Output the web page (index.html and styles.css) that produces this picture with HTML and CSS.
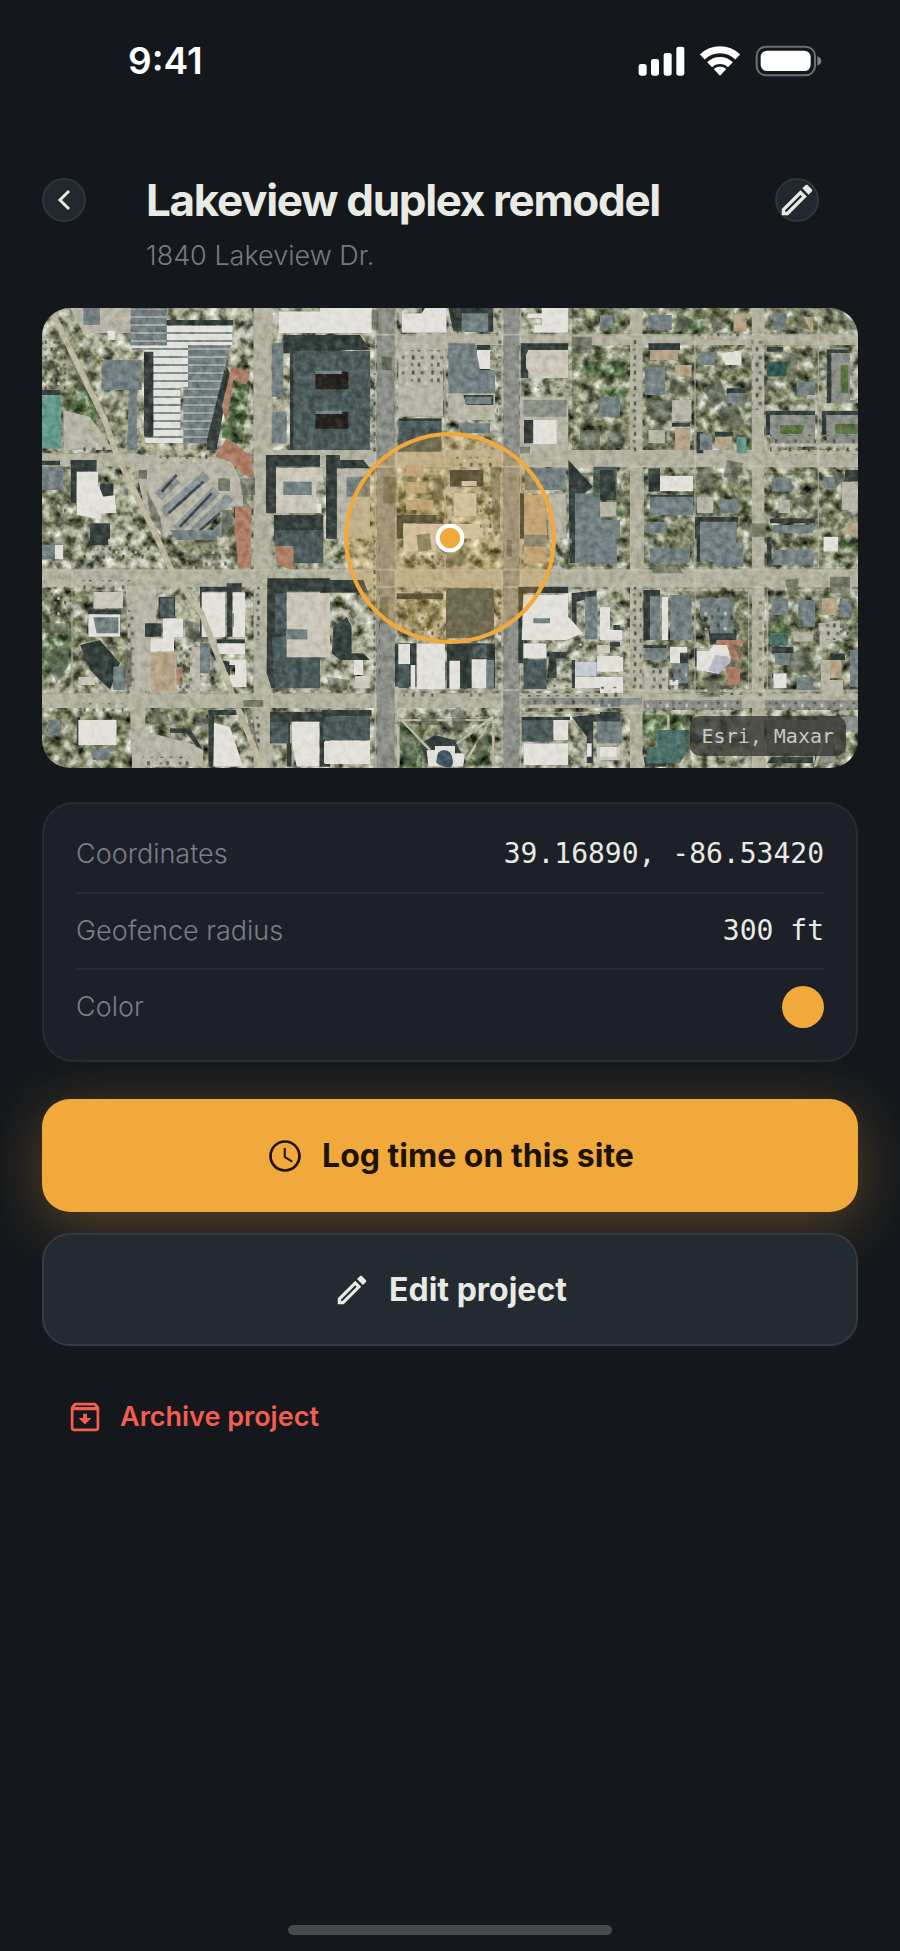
FILE: index.html
```html
<!DOCTYPE html>
<html lang="en">
<head>
	<meta charset="utf-8">
	<meta name="viewport" content="width=device-width, initial-scale=1">
	<title>Lakeview duplex remodel</title>
	<link rel="stylesheet" href="styles.css">
</head>
<body>
	<div class="status">
		<span class="time">9:41</span>
		<svg class="status-icons" viewBox="0 0 552 92" aria-hidden="true">
			<g fill="#fff">
				<rect x="2" y="55" width="24" height="35" rx="7"/>
				<rect x="39" y="40" width="24" height="50" rx="7"/>
				<rect x="77" y="22" width="24" height="68" rx="7"/>
				<rect x="115" y="3" width="24" height="87" rx="7"/>
				<path d="M246 90L227 70A27 27 0 0 1 265 70Z"/>
				<rect x="368" y="15" width="150" height="61" rx="19"/>
			</g>
			<g fill="none" stroke="#fff" stroke-width="21">
				<path d="M193 34A76 76 0 0 1 299 34M215 57A44 44 0 0 1 277 57"/>
			</g>
			<rect x="356" y="3" width="175" height="86" rx="28" fill="none" stroke="#6d7073" stroke-width="6"/>
			<path d="M538 32Q550 36 550 46T538 60Z" fill="#7c7f81"/>
		</svg>
	</div>

	<header class="header">
		<button class="round" aria-label="Back">
			<svg viewBox="0 0 44 44"><path d="M27 13L18 22L27 31" fill="none" stroke="currentColor" stroke-width="3"/></svg>
		</button>
		<h1>Lakeview duplex remodel</h1>
		<button class="round" aria-label="Edit project details">
			<svg viewBox="-1 -1 26 26"><path d="M14.060 9.020l.920.920L5.920 19H5v-.920l9.060-9.060M17.660 3c-.250 0-.510.100-.700.290l-1.830 1.830 3.750 3.750 1.830-1.830c.390-.390.390-1.020 0-1.410l-2.340-2.340c-.200-.200-.450-.290-.710-.290zm-3.600 3.190L3 17.250V21h3.750L17.810 9.940l-3.750-3.750z"/></svg>
		</button>
		<p class="address">1840 Lakeview Dr.</p>
	</header>

	<main>
		<div class="map">
			<svg class="map-view" viewBox="0 0 2448 1380" preserveAspectRatio="xMidYMid slice" role="img" aria-label="Satellite map of the project site">
				<defs>
					<filter id="rough" x="0" y="0" width="100%" height="100%" color-interpolation-filters="sRGB">
						<feTurbulence type="fractalNoise" baseFrequency=".032" numOctaves="3" seed="7" result="n"/>
						<feColorMatrix in="n" values="1.250 .100 0 0 -.180  1.250 .120 0 0 -.180  1.250 0 .050 0 -.170  0 0 0 0 1" result="g"/>
						<feBlend in="g" in2="SourceGraphic" mode="hard-light" result="b"/>
						<feGaussianBlur in="b" stdDeviation="2" result="s"/>
						<feComposite in="s" in2="SourceGraphic" operator="in"/>
					</filter>
					<filter id="fine" x="0" y="0" width="100%" height="100%" color-interpolation-filters="sRGB">
						<feTurbulence type="fractalNoise" baseFrequency=".050" numOctaves="3" seed="3" result="n"/>
						<feColorMatrix in="n" values=".600 0 0 0 .200  .600 0 0 0 .200  .600 0 0 0 .200  0 0 0 0 1" result="g"/>
						<feBlend in="g" in2="SourceGraphic" mode="soft-light" result="b"/>
						<feComposite in="b" in2="SourceGraphic" operator="in" result="c"/>
						<feGaussianBlur in="c" stdDeviation="2"/>
					</filter>
					<pattern id="ribs" width="20" height="24" patternUnits="userSpaceOnUse">
						<rect width="20" height="24" fill="#e2e2df"/><rect width="20" height="6" fill="#858d8b"/>
					</pattern>
					<pattern id="ribs-grey" width="20" height="24" patternUnits="userSpaceOnUse">
						<rect width="20" height="24" fill="#737f80"/><rect width="20" height="6" fill="#a0a8a6"/>
					</pattern>
					<pattern id="cars" width="58" height="46" patternUnits="userSpaceOnUse">
						<rect x="3" y="4" width="8" height="12" fill="#565b53"/><rect x="24" y="16" width="7" height="10" fill="#d0cdbf"/><rect x="40" y="6" width="9" height="9" fill="#777a6d"/><rect x="12" y="30" width="10" height="9" fill="#666a5e"/><rect x="44" y="28" width="7" height="12" fill="#4c524b"/>
					</pattern>
				</defs>

				<g filter="url(#rough)">
					<rect width="2448" height="1380" class="m-lot"/>
					<!-- downtown blocks -->
					<path class="m-yard" d="M0 150L110 80L290 420H0ZM60 30L180 170L250 380L170 300ZM0 500H170V760H0ZM0 850H290V1130H0ZM260 580L390 830H560V640L380 700ZM470 500H620V760H540ZM0 1210H280V1380H0ZM330 1190H530V1380H330ZM1070 500H1200V660H1070ZM1080 850H1200V970H1080ZM1070 1230H1350V1380H1070Z"/>
					<!-- residential blocks -->
					<path class="m-grove" d="M1590 0H1764V81H1590ZM1804 0H2129V81H1804ZM2169 0H2448V81H2169ZM1590 121H1764V436H1590ZM1804 121H2129V436H1804ZM2169 121H2330V290H2169ZM1580 496H1764V776H1580ZM1804 496H2129V776H1804ZM2169 496H2448V776H2169ZM1804 850H2129V1146H1804ZM2179 850H2448V1146H2179ZM1804 1220H1950V1380H1804ZM2179 1220H2448V1380H2179Z"/>
					<path class="m-green" d="M70 300L110 220L165 270L160 350L90 330ZM0 970H90V1100H0ZM550 210L625 220L600 410L540 390ZM1630 160H1750V210H1630ZM1690 235H1760V275H1690ZM1075 1240L1140 1290V1380H1075ZM1275 1370L1345 1260V1370ZM2390 170H2420V280H2390ZM2110 395H2130V430H2110ZM2180 930H2240V1010H2180ZM1800 1220H1945V1290H1800ZM2200 740H2290V770H2200ZM2370 700H2440V730H2370ZM1920 30H1990V70H1920ZM1960 720H2080V770H1960ZM1650 600H1740V640H1650Z"/>
				</g>

				<g filter="url(#fine)">
					<!-- streets -->
					<path class="m-street" d="M0 436H280L420 470H684V426H2448V476H0ZM0 786H2448V836H0ZM0 1156H2448V1200H0ZM634 0H688V1380H634ZM1764 0H1802V1380H1764ZM2129 0H2167V1380H2129ZM1000 82H2448V112H1000ZM250 790H310V1380H270Z"/>
					<path class="m-asphalt" d="M1004 0H1058V1380H1004ZM1384 0H1432V1380H1384ZM1804 1176H2100V1206H1804ZM2170 1176H2448V1206H2170ZM1434 1170H1800V1190H1434Z"/>
					<path class="m-line" d="M0 785H2448M0 837H2448M1000 80H2448M684 476H2448M1060 1146H2448M1434 1214H1804M1800 1150H2448M2176 1140V840M2120 836V1140M1000 0V1380M1062 0V1380M1380 0V1380M1436 0V1380M1209 100V830M1959 90V1150M2329 30V780M690 0V1380M90 760V1140M1804 496V770"/>

					<g transform="translate(-36 -24)">
						<path class="m-pave" d="M120 24H300V100H160ZM100 330L180 350L250 450H100ZM310 470H600L640 560V620H560L480 716L410 700L340 610Z"/>
						<path class="m-slate" d="M160 24H210V75H160ZM302 24H410V136H302ZM215 180H335V270H215ZM725 130H760V290H725ZM725 335H770V430H725ZM300 200H322V450H290ZM36 500H100V570H36Z"/>
						<path class="m-shade" d="M345 150H372V430H345ZM400 60H610V76H400ZM530 360L590 200L600 220L560 450H530ZM760 105H930V450H780V160H760ZM708 465H870V500H738V640H708ZM122 480H200V515H140V610H122ZM888 465H930V716H888ZM36 482H90V496H36ZM210 550H250V590H210ZM36 270H90V286H36ZM180 670H240V716H180ZM732 645H880V716H732Z"/>
						<path class="m-teal" d="M36 285H94V446H36Z"/>
						<path fill="url(#ribs)" d="M410 76H608V136H410ZM305 136H474V262H452V428H345V150H305ZM350 410H460V430H350Z"/>
						<path fill="#363d3b" d="M342 155H370V410H342Z"/>
						<path fill="url(#ribs-grey)" d="M474 136H602L528 430H460V262H474ZM302 28H410V134H302Z"/>
						<path class="m-brick" d="M575 320L605 200L660 215L650 255L610 240L590 370ZM555 470L590 415L668 470V535L640 525L600 485ZM615 620H664V716H615Z"/>
						<path class="m-roof" d="M140 515H205V555L220 590L255 585L260 640H215V660L140 645ZM232 92H256V120H232ZM745 34H930V100H745ZM835 610H875V640H835Z"/>
						<path class="m-cream" d="M738 503H880V545H860V640H738ZM320 355H335V385H320Z"/>
						<path class="m-slate" d="M760 545H845V585H760Z"/>
						<path class="m-dark" d="M790 152H930V450H790Z"/>
						<path class="m-cars" d="M385 590L440 535M400 640L530 525M440 690L560 570M480 710L600 590M560 700L610 650"/>
						<path class="m-dashes" d="M395 575L440 525M415 640L520 545M450 680L545 580M500 700L570 640"/>
						<path class="m-tree" d="M325 510h26v26h-26ZM565 535h35v38h-35ZM350 570l40 80 10 60-40-60ZM630 535h45v50h-40ZM610 630h-35v80h30ZM130 190l60 100-40-20Z"/>
						<path fill="url(#cars)" d="M40 120H110V270H40ZM150 430H250V460H150ZM380 455H560V490H380ZM60 580H110V640H60Z"/>
					</g>

					<g transform="translate(834 -24)">
						<path class="m-pave" d="M235 130H370V350H235ZM385 280H525V360H385ZM50 505H150V716H50ZM600 290H745V460H600Z"/>
						<path class="m-asphalt" d="M610 300H740V350H610Z"/>
						<path class="m-shade" d="M0 105H120L150 150H0ZM385 24H520V95H400ZM24 480H130L150 505H50V716H24ZM602 130H745V150H625V235H602ZM612 360H640V430H612ZM235 355H365V365H235ZM470 135H510V210H470ZM745 480L820 560L770 600V716H748ZM305 24H380V40H305ZM430 285H520V315H440ZM390 510H490V560H390ZM230 645H350V670H250V716H230ZM600 580H612V716H600Z"/>
						<path class="m-dark" d="M0 152H150V450H0ZM235 365H365V455H235ZM820 500H890V600H820Z"/>
						<path fill="#272420" d="M0 215H85V268H0ZM0 335H85V386H0Z"/>
						<path fill="#272420" d="M-14 215H0V268H-14ZM-14 335H0V386H-14Z"/>
						<path class="m-roof" d="M0 24H158V100H0ZM245 40H305L315 24H380V98H245ZM622 55H665V75H640V98H745V24H665V40H622ZM640 360H710V432H640ZM470 150H510V207H470Z"/>
						<path class="m-slate" d="M-14 212H65V222H-14ZM-14 332H65V342H-14Z"/>
						<path class="m-cream" d="M625 150H745V235H640L618 205V165ZM400 578H470V650H400ZM250 672H490V716H250ZM425 543H470V558H425Z"/>
						<path class="m-slate" d="M385 130H465L480 210H525V280H385ZM425 40H505V95H425ZM435 290H515V312H435ZM615 505H735V570H615ZM765 580H845V716H765ZM415 370H510V400H430ZM80 530H150V590H80Z"/>
						<path class="m-tan" d="M612 585H680V705H612ZM258 495H310V530H258ZM258 545H320V580H258ZM258 600H340V630H258Z"/>
						<path class="m-pave" d="M685 580H740V716H685Z"/>
						<path class="m-tree" d="M155 30h20v60h-20ZM185 170h30v40h-30ZM600 440h30v20h-30ZM190 530h40v80h-40ZM340 540h30v60h-30ZM510 500h30v200h-20ZM820 520h60v70h-60ZM755 110h60v50h-60ZM780 390h60v60h-60Z"/>
						<path fill="url(#cars)" d="M245 150H375V255H245ZM530 30H550V350H530ZM155 220H175V460H155ZM400 470H520V500H400ZM625 245H745V265H625ZM480 580H540V716H480Z"/>
					</g>

					<g transform="translate(1674 -24)">
						<path class="m-shade" d="M680 148H748V160H695V310H680ZM497 332H645V345H510V405H497ZM665 332H774V345H680V405H665ZM145 505H180V575H145ZM285 650H415V670H300V716H285ZM145 130H240V150H145ZM0 510H40L50 600H0ZM380 265H440V280H380ZM215 368H270V380H215ZM500 140H550V155H500ZM345 395H400V410H345ZM290 395H310V460H290ZM150 585H280V600H150ZM510 655H645V670H510ZM735 510H774V545H735Z"/>
						<path class="m-asphalt" d="M695 160H750V310H695ZM510 345H645V430H510ZM680 345H774V430H680ZM745 300H774V310H745Z"/>
						<path fill="#5b7442" d="M540 375H615L605 402H540ZM705 372H774V402H705ZM722 195H745V280H722Z"/>
						<path class="m-roof" d="M180 527H280V574H180ZM362 160L425 150V195H375Z"/>
						<path class="m-slate" d="M135 200H195V285H135ZM150 590H280V645H150ZM300 665H410V716H300ZM360 598H415V640H360ZM0 290H60V350H0ZM140 665H200V700H140ZM0 660H60V716H0ZM515 535H575V575H515ZM520 675H640V700H520ZM300 155H345V195H300ZM380 280H430V310H380ZM520 40H560V90H520ZM145 45H215V90H145ZM590 245H645V285H590ZM300 400H335V450H300ZM0 45H40V85H0ZM670 530H710V565H670Z"/>
						<path class="m-teal" d="M410 410H440V460H410Z"/>
						<path fill="#2f5a50" d="M500 185H560V230H500Z"/>
						<path class="m-pave" d="M725 545H774V630H725ZM535 600H570V640H535ZM290 590H340V640H290ZM510 430H774V440H510ZM145 390H195V430H145ZM0 605H50V650H0ZM215 300H275V365H215Z"/>
						<path class="m-tan" d="M400 40H440V95H400ZM345 410H395V445H345ZM225 195H275V230H225ZM735 668H774V700H735ZM150 150H235V180H150ZM610 50H640V95H610ZM225 385H270V450H225Z"/>
						<path class="m-tree" d="M310 265l50-30 20 60-40 30ZM350 330l60-20 25 60-50 30ZM380 480l50 10-20 50-40-10ZM60 550l30 70-40-20ZM570 600l60-20v60ZM555 155l40 10-10 90-30-30ZM140 300h60v60h-50ZM290 500h50v70h-40ZM690 500l50 30-30 30ZM440 670h60v40h-50ZM230 40l50 20-20 40-30-10ZM330 50l50 30-40 20ZM20 400l40-20 10 60-40 10ZM210 240l60 10-20 40-40-10ZM600 30l30 60-40-10Z"/>
						<path fill="url(#cars)" d="M510 405H650V465H510ZM670 405H774V465H670ZM85 120H110V460H85ZM455 120H490V330H455ZM270 100H440V120H270Z"/>
					</g>

					<g transform="translate(-36 666)">
						<path class="m-pave" d="M360 365H440V490H360ZM320 170H380V480H320ZM480 350H510V500H480ZM330 600L520 650V710H340Z"/>
						<path class="m-shade" d="M510 170H590V185H525V320H510ZM590 160H635V190H607V320H590ZM385 200H435V265H385ZM345 280H395V320H345ZM175 238H275V252H175V310H170ZM150 345L210 330L270 400L240 480L180 420ZM535 540H620V555H552V710H535ZM712 145H900V185H770V475H725L710 430ZM720 545H900V575H780V640H720ZM560 328H645V345H560ZM180 0H235V45H180ZM140 560H150V640H140ZM570 390L600 395V440ZM770 640H785V710H770ZM870 545H900V710H868ZM420 595H480L520 660L500 650L470 610H420Z"/>
						<path class="m-roof" d="M515 187H586V322H515ZM608 187H645V322H608ZM398 265H460V322H432V365H362V325H398ZM560 340H645V372H560ZM598 388H650V472H598V435H615V405H598ZM175 253H270V320H175ZM145 570H260V645H145ZM552 578L600 590L640 710H550ZM785 575H868V710H800L785 640ZM882 635H900V700H882ZM75 44H100V88H75Z"/>
						<path class="m-slate" d="M190 262H265V310H200ZM36 44H75V88H36ZM250 410H285V480H250ZM510 340H540V430H510ZM55 570H90V615H55ZM180 655H240V690H190ZM420 0H560V30H440Z"/>
						<path class="m-dark" d="M735 0H880V100H790V50H735ZM725 320H770V380H870V475H735ZM390 205H432V262H390ZM735 190H768V310H735ZM722 575H775V640H722Z"/>
						<path class="m-tan" d="M362 368H435V485H362Z"/>
						<path class="m-cream" d="M770 187H900V382H770ZM145 440H195V465H145ZM190 185H280V235H190Z"/>
						<path class="m-slate" d="M770 298H832V328H770Z"/>
						<path class="m-brick" d="M735 48H790V120L740 105ZM615 0H664V115H625ZM440 410H458V465H440Z"/>
						<path class="m-tree" d="M465 270l40 10 10 60-50-20ZM650 550l15-5 25 140-30-70ZM495 550l30-5-5 45-25-5ZM40 370l70-30 10 60-40 60ZM350 550l60-5 10 30-60 10ZM640 510h60v20h-60ZM600 250h12v40h-12ZM280 360h25v110h-20ZM45 280h70v30h-70Z"/>
						<path fill="url(#cars)" d="M140 40H370V95H140ZM150 150H300V180H150ZM50 170H130V260H50ZM290 240H315V470H290ZM440 350H500V480H440ZM660 170H690V330H660ZM660 560H690V700H660ZM340 680H480V710H340ZM460 60H600V120H460ZM150 520H280V545H150Z"/>
					</g>

					<g transform="translate(834 666)">
						<path class="m-shade" d="M0 150H130L145 188H0ZM80 260L95 290V370H130L150 390H60L35 370L40 290ZM225 340H290V470H225ZM380 340H525V475H380ZM595 170H745V190H610V400H595ZM5 540H155V560H5ZM690 365H740V385H710V445H680ZM755 190L830 180V200L770 215V320H755ZM605 560H750V570H605ZM755 560L900 545V575H820V700H800V620ZM230 190H370V208H230ZM300 640L345 615L405 630L440 700H320ZM380 175H520V190H380ZM755 0H765V100H755ZM880 285H900V300H880ZM755 390H765V475H755ZM750 40H760V100H750ZM870 335H900V350H870Z"/>
						<path class="m-dark" d="M378 178H522V325H378ZM610 388H680V478H610ZM10 560H150V630H10ZM235 400H268V475H235ZM605 570H700V635H605ZM460 345H500V385H460Z"/>
						<path class="m-roof" d="M290 340H375V478H290ZM235 342H270V402H235ZM272 405H286V478H272ZM388 392H420V478H388ZM455 388H500V475H455ZM610 195H745V260L790 310L740 330H605ZM610 340H680V385H610ZM840 232H870V300H900V330H840ZM830 378H900V425H830ZM765 440H900V475H765ZM15 632H150V702H15ZM610 640H745V706H610ZM700 570H745V630H700ZM320 660H345V648H405V670H435L430 710H325ZM100 390H130V435H100ZM800 640H815V680H800Z"/>
						<path fill="#c4cbd3" d="M765 395H830V440H765Z"/>
						<path class="m-cream" d="M250 0H350V65H250ZM350 0H490V15H350ZM0 190H25V345H0ZM105 438H150V475H100ZM830 650H900V690H830ZM830 345H870V370H830Z"/>
						<path class="m-tan" d="M612 0H680V100H612Z"/>
						<path class="m-slate" d="M612 15H680V50H612ZM765 20H890V100H765ZM795 200H832V328H795ZM830 575H900V640H830ZM640 265H690V280H640ZM500 390H522V478H500Z"/>
						<path fill="#3f5563" d="M350 690Q350 660 372 660T398 690T372 710T350 690Z"/>
						<path class="m-path" d="M235 560L330 660M520 560L410 640M500 590L440 690M235 590V710M520 580V710M235 570H520"/>
						<path class="m-tree" d="M390 540l30-10 25 60-40 20ZM300 550l50 5 5 30-50 0ZM240 600l40 30 10 60-40 10ZM470 630l35-15v60l-40 10ZM20 440l70 10-10 30h-50ZM290 15l40-5 5 50-40 5ZM180 200h25v80h-25ZM380 70h60v35h-60ZM560 30h15v50h-15Z"/>
						<path fill="url(#cars)" d="M250 490H340V510H250ZM430 490H500V510H430ZM160 30H180V460H160ZM530 180H550V480H530ZM600 495H900V525H600ZM250 75H380V105H250ZM250 545H500V560H250ZM700 400H760V470H700ZM260 220H370V320H260ZM760 340H820V370H760Z"/>
					</g>

					<g transform="translate(1674 666)">
						<path class="m-shade" d="M130 180H180V200H150V330H130ZM290 0H300V95H290ZM325 300H410V330L330 345ZM500 20H515V105H500ZM515 350H580V370H515ZM515 430H560V445H515ZM515 680H640V700H500ZM645 560H774V580H680V700H645ZM0 545H60V570H0ZM130 345H200V355H130ZM285 355H300V410H285ZM690 370H735V390H690ZM240 370H265V470H235ZM130 680H200V710H135Z"/>
						<path class="m-slate" d="M0 0H50V100H0ZM300 0H410V95H300ZM350 40H430V110H350ZM150 55H270V98H150ZM150 200H180V330H150ZM210 195H275V330H210ZM300 205H400V310H330V260H300ZM135 355H200V390H135ZM220 400H265V460H220ZM515 205H565V255H515ZM595 210H645V290H595ZM520 60H640V105H520ZM525 370H570V405H525ZM590 440H640V480H590ZM0 575H65V640H0ZM720 205H755V260H720ZM750 360H774V470H750ZM0 505H60V530H0Z"/>
						<path fill="#4c7068" d="M170 600H270V650L240 700H140V650H170ZM510 310H565V345H510Z"/>
						<path class="m-roof" d="M290 362H325L340 345H385L392 395L355 432L290 420ZM210 350H262V368H240V400H210ZM208 450H235V465H208ZM0 380H70V425H0ZM0 440H70V490H0ZM5 230H30V300H68V330H5ZM670 20H715V65H670ZM520 430H560V475H520ZM0 650H50V680H0ZM185 200H205V330H185Z"/>
						<path fill="#b8b9c8" d="M325 420L345 375L385 380L392 395L355 432Z"/>
						<path class="m-brick" d="M350 330H430L425 400L395 385L380 345H345ZM380 410H420V465H380Z"/>
						<path class="m-pave" d="M655 280L720 270V330L660 350ZM660 390H690V450H730V500H665ZM130 415H205V490H130ZM580 310H640V335H580ZM290 355H330V362H290Z"/>
						<path class="m-asphalt" d="M500 570H650V670H500ZM650 560H774V600H700V700H650Z"/>
						<path class="m-tan" d="M665 205H710V255H665ZM735 0H774V12H735ZM690 390H725V445H690Z"/>
						<path class="m-path" d="M205 555V600M645 710L680 600"/>
						<path class="m-tree" d="M570 370l50-20 25 50-40 40-40-20ZM570 260l40 10v40ZM545 260l-40 5v40ZM150 110l80-10 20 30h-90ZM555 150l40-5v50h-30ZM690 140h60v50h-60ZM400 345l30 5-10 40ZM320 450l40 10v40h-50ZM250 560h20v110h-10Z"/>
						<path fill="url(#cars)" d="M80 170H125V480H80ZM475 180H500V500H475ZM140 410H260V480H140ZM295 455H430V495H295ZM650 270H760V330H650ZM0 470H60V530H0ZM300 225H420V300H300ZM140 515H420V540H140ZM505 515H770V540H505Z"/>
					</g>

					<path class="m-trail" d="M34 20L190 340L224 440L344 686L390 790L480 920L560 1130L660 1380"/>
				</g>

				<circle class="geofence" cx="1224" cy="690" r="312"/>
				<circle class="pin" cx="1224" cy="690" r="37"/>
			</svg>
			<span class="credit">Esri, Maxar</span>
		</div>

		<dl class="card">
			<div class="row">
				<dt>Coordinates</dt>
				<dd>39.16890, -86.53420</dd>
			</div>
			<div class="row">
				<dt>Geofence radius</dt>
				<dd>300 ft</dd>
			</div>
			<div class="row">
				<dt>Color</dt>
				<dd><span class="swatch" role="img" aria-label="Amber"></span></dd>
			</div>
		</dl>

		<div class="actions">
			<button class="btn primary">
				<svg viewBox="0 0 24 24"><path d="M11.990 2C6.470 2 2 6.480 2 12s4.470 10 9.990 10C17.520 22 22 17.520 22 12S17.520 2 11.990 2zM12 20.300c-4.580 0-8.300-3.720-8.300-8.300S7.420 3.700 12 3.700s8.300 3.720 8.300 8.300-3.720 8.300-8.300 8.300zM12.500 7H11.200v6l5.050 3.050.650-1.070-4.400-2.680V7z"/></svg>
				Log time on this site
			</button>
			<button class="btn secondary">
				<svg viewBox="0 0 24 24"><path d="M14.060 9.020l.920.920L5.920 19H5v-.920l9.060-9.060M17.660 3c-.250 0-.510.100-.700.290l-1.830 1.830 3.750 3.750 1.830-1.830c.390-.390.390-1.020 0-1.410l-2.340-2.340c-.200-.200-.450-.290-.710-.290zm-3.600 3.190L3 17.250V21h3.750L17.810 9.940l-3.750-3.750z"/></svg>
				Edit project
			</button>
		</div>

		<button class="archive">
			<svg viewBox="0 0 24 24"><path d="M20.540 5.230l-1.390-1.680C18.880 3.210 18.470 3 18 3H6c-.470 0-.880.210-1.160.550L3.460 5.230C3.170 5.570 3 6.020 3 6.500V19c0 1.100.900 2 2 2h14c1.100 0 2-.900 2-2V6.500c0-.480-.170-.930-.460-1.270zM6.240 4.700h11.520l.830 1H5.420l.820-1zM4.700 19.300V7.700h14.600v11.600H4.700zM10.800 10h2.400v2.700H16l-4 4-4-4h2.800z"/></svg>
			Archive project
		</button>
	</main>

	<div class="home-bar"></div>
</body>
</html>
```
FILE: styles.css
```css
*{
	box-sizing: border-box;
}
body{
	margin: 0;
	min-height: 100vh;
	display: flex;
	flex-direction: column;
	background-color: #14181d;
	color: #e9eae4;
	font-family: Inter, "Liberation Sans", sans-serif;
	font-size: 27px;
	line-height: 40px;
}
h1, p, dl, dd{
	margin: 0;
}
button{
	padding: 0;
	border: none;
	background: none;
	color: inherit;
	font: inherit;
	cursor: pointer;
}
svg{
	display: block;
	fill: currentColor;
}

/* status bar */
.status{
	display: flex;
	justify-content: space-between;
	align-items: center;
	height: 122px;
	padding: 0 78px 0 128px;
}
.time{
	color: #fff;
	font-size: 37px;
	font-weight: 600;
}
.status-icons{
	width: 184px;
	height: 32px;
}

/* header */
.header{
	display: grid;
	grid-template-columns: 44px 1fr 44px;
	column-gap: 60px;
	align-items: center;
	padding: 50px 81px 0 42px;
}
.header h1{
	font-size: 44px;
	line-height: 56px;
	font-weight: 700;
	letter-spacing: -0.03em;
	white-space: nowrap;
}
.address{
	grid-column: 2;
	margin-top: 8px;
	color: #767a82;
	font-weight: 300;
}
.round{
	display: flex;
	justify-content: center;
	align-items: center;
	width: 44px;
	height: 44px;
	border: 2px solid #31363d;
	border-radius: 50%;
	background-color: #222830;
}
.round svg{
	flex: none;
	width: 44px;
	height: 44px;
}

main{
	display: flex;
	flex-direction: column;
	padding: 32px 42px 0;
}

/* map */
.map{
	position: relative;
	height: 460px;
	border-radius: 28px;
	overflow: hidden;
}
.map-view{
	width: 100%;
	height: 100%;
}
.m-lot{ fill: #a5a592; }
.m-yard{ fill: #86876f; }
.m-grove{ fill: #7f826a; }
.m-green{ fill: #5d7350; }
.m-street{ fill: #b3b2a0; }
.m-asphalt{ fill: #8d9088; }
.m-pave{ fill: #b7b5a6; }
.m-shade{ fill: #343f3b; }
.m-dark{ fill: #4b5a5a; }
.m-slate{ fill: #748182; }
.m-teal{ fill: #659a8c; }
.m-brick{ fill: #ad7f66; }
.m-roof{ fill: #e3e1db; }
.m-cream{ fill: #cbc7b9; }
.m-tan{ fill: #b5a487; }
.m-tree{
	fill: #4b5540;
	opacity: .6;
}
.m-line{
	fill: none;
	stroke: #c9c6b4;
	stroke-width: 5;
	opacity: .7;
}
.m-path{
	fill: none;
	stroke: #b9b8a4;
	stroke-width: 8;
}
.m-trail{
	fill: none;
	stroke: #bcb8a0;
	stroke-width: 18;
	stroke-linejoin: round;
}
.m-cars{
	fill: none;
	stroke: #8e9797;
	stroke-width: 30;
}
.m-dashes{
	fill: none;
	stroke: #3f494a;
	stroke-width: 8;
}
.geofence{
	fill: #f2a93b;
	fill-opacity: .22;
	stroke: #f2a93b;
	stroke-width: 12;
}
.pin{
	fill: #f2a93b;
	stroke: #fff;
	stroke-width: 12;
}
.credit{
	position: absolute;
	right: 12px;
	bottom: 12px;
	padding: 0 12px;
	border-radius: 10px;
	background-color: rgba(48, 48, 45, .75);
	color: #c9c9c6;
	font-family: "DejaVu Sans Mono", monospace;
	font-size: 20px;
}

/* details */
.card{
	margin-top: 34px;
	padding: 12px 32px 16px;
	border: 2px solid #282b31;
	border-radius: 32px;
	background-color: #1d2028;
}
.row{
	display: flex;
	justify-content: space-between;
	align-items: center;
	height: 76px;
}
.row + .row{
	border-top: 2px solid #292c32;
}
dt{
	color: #7a7e85;
	font-weight: 300;
}
dd{
	font-family: "DejaVu Sans Mono", monospace;
	font-size: 28px;
}
.swatch{
	display: block;
	width: 42px;
	height: 42px;
	border-radius: 50%;
	background-color: #f2a93b;
}

/* buttons */
.actions{
	display: flex;
	flex-direction: column;
	gap: 21px;
	margin-top: 37px;
}
.btn{
	display: flex;
	justify-content: center;
	align-items: center;
	gap: 18px;
	height: 113px;
	border-radius: 28px;
	font-size: 32px;
	font-weight: 700;
}
.btn svg,
.archive svg{
	width: 38px;
	height: 38px;
}
.primary{
	background-color: #f2a93b;
	color: #1c1303;
	box-shadow: 0 12px 60px rgba(242, 169, 59, .32);
}
.secondary{
	/* sits above the glow of the button before it */
	position: relative;
	border: 2px solid #333a41;
	background-color: #242a32;
}
.archive{
	display: flex;
	align-items: center;
	align-self: flex-start;
	gap: 16px;
	margin-top: 51px;
	padding: 0 24px;
	color: #f45d4f;
	font-weight: 600;
}

.home-bar{
	width: 36%;
	height: 10px;
	margin: auto auto 16px;
	border-radius: 5px;
	background-color: #47494c;
}
```
